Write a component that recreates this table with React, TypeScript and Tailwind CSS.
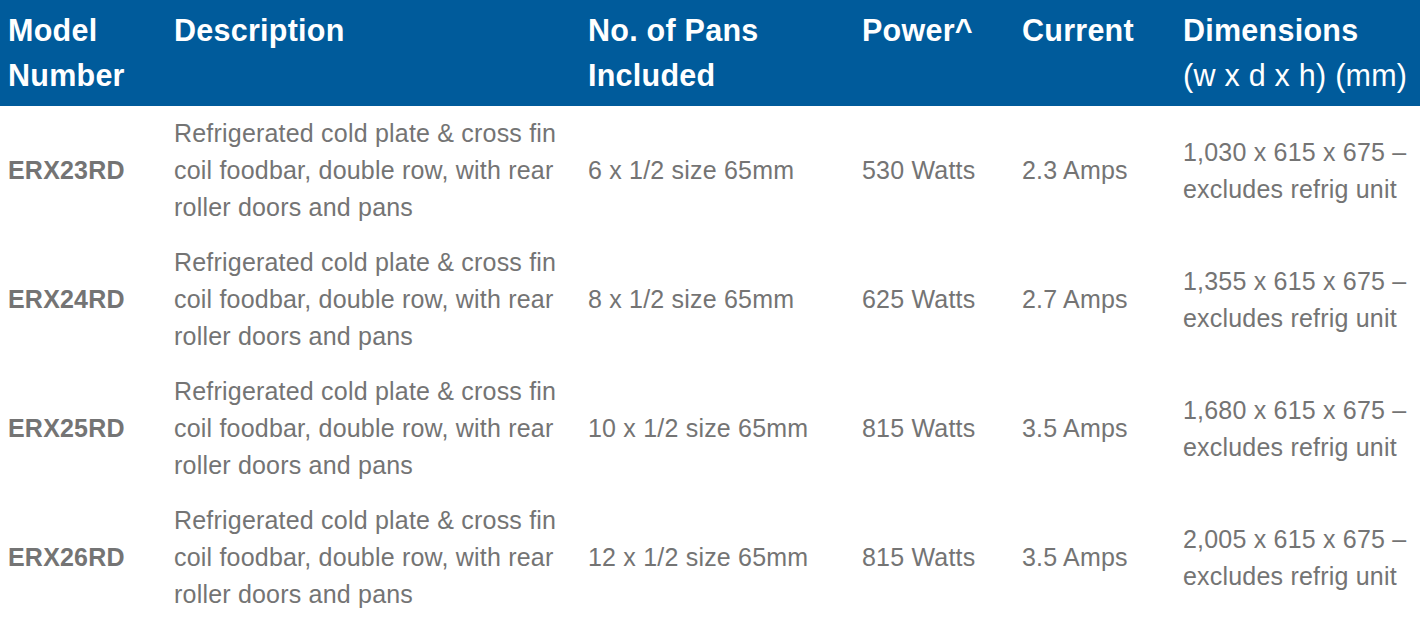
const rows = [
  { model: "ERX23RD", pans: "6 x 1/2 size 65mm", power: "530 Watts", current: "2.3 Amps", dims: "1,030 x 615 x 675 –" },
  { model: "ERX24RD", pans: "8 x 1/2 size 65mm", power: "625 Watts", current: "2.7 Amps", dims: "1,355 x 615 x 675 –" },
  { model: "ERX25RD", pans: "10 x 1/2 size 65mm", power: "815 Watts", current: "3.5 Amps", dims: "1,680 x 615 x 675 –" },
  { model: "ERX26RD", pans: "12 x 1/2 size 65mm", power: "815 Watts", current: "3.5 Amps", dims: "2,005 x 615 x 675 –" },
];

const desc = "Refrigerated cold plate & cross fin coil foodbar, double row, with rear roller doors and pans";

export default function App() {
  return (
    <div className="w-[1420px] min-h-[637px] bg-white font-['Liberation_Sans',Arial,sans-serif]">
      <table className="w-full table-fixed border-collapse">
        <colgroup>
          <col className="w-[166px]" />
          <col className="w-[414px]" />
          <col className="w-[274px]" />
          <col className="w-[160px]" />
          <col className="w-[161px]" />
          <col className="w-[245px]" />
        </colgroup>
        <thead>
          <tr className="bg-[#005b9b] text-white text-[30.5px] leading-[45px] tracking-[0.25px] text-left align-top">
            <th className="px-2 py-2 font-bold">Model Number</th>
            <th className="px-2 py-2 font-bold">Description</th>
            <th className="px-2 py-2 font-bold">No. of Pans Included</th>
            <th className="px-2 py-2 font-bold">Power^</th>
            <th className="px-2 py-2 font-bold">Current</th>
            <th className="px-2 py-2 font-bold">
              Dimensions
              <br />
              <span className="font-normal">(w x d x h) (mm)</span>
            </th>
          </tr>
        </thead>
        <tbody>
          {rows.map((r) => (
            <tr key={r.model} className="text-[25px] leading-[37px] tracking-[0.2px] text-[#747474] align-middle">
              <td className="px-2 py-[9px] font-bold">{r.model}</td>
              <td className="px-2 py-[9px]">{desc}</td>
              <td className="px-2 py-[9px]">{r.pans}</td>
              <td className="px-2 py-[9px]">{r.power}</td>
              <td className="px-2 py-[9px]">{r.current}</td>
              <td className="px-2 py-[9px]">
                {r.dims}
                <br />
                excludes refrig unit
              </td>
            </tr>
          ))}
        </tbody>
      </table>
    </div>
  );
}
